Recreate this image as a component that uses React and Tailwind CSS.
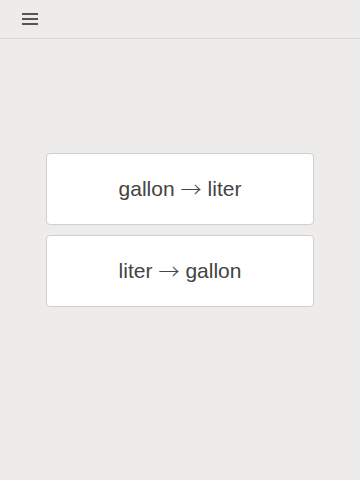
import React from 'react';

const conversions = [
  ['gallon', 'liter'],
  ['liter', 'gallon'],
];

const App = () => {
  return (
    <div className="min-h-[480px] w-full bg-[#edeceb] font-['Liberation_Sans',Arial,sans-serif]">
      <header className="flex h-[39px] items-center border-b border-[#d9d8d7] pl-[22px]">
        <button className="flex h-[12px] w-[16px] flex-col justify-between">
          <span className="block h-[2px] w-full bg-[#555]"></span>
          <span className="block h-[2px] w-full bg-[#555]"></span>
          <span className="block h-[2px] w-full bg-[#555]"></span>
        </button>
      </header>
      <main className="flex flex-col items-center gap-[10px] pt-[114px]">
        {conversions.map(([from, to]) => (
          <button
            key={from}
            className="flex h-[72px] w-[268px] items-center justify-center rounded-[4px] border border-[#cfcfcf] bg-white text-[21px] text-[#444]"
          >
            {from}
            <span className="mx-[6px] font-['Noto_Sans_CJK_JP',sans-serif] text-[21px] font-light">→</span>
            {to}
          </button>
        ))}
      </main>
    </div>
  );
};

export default App;
